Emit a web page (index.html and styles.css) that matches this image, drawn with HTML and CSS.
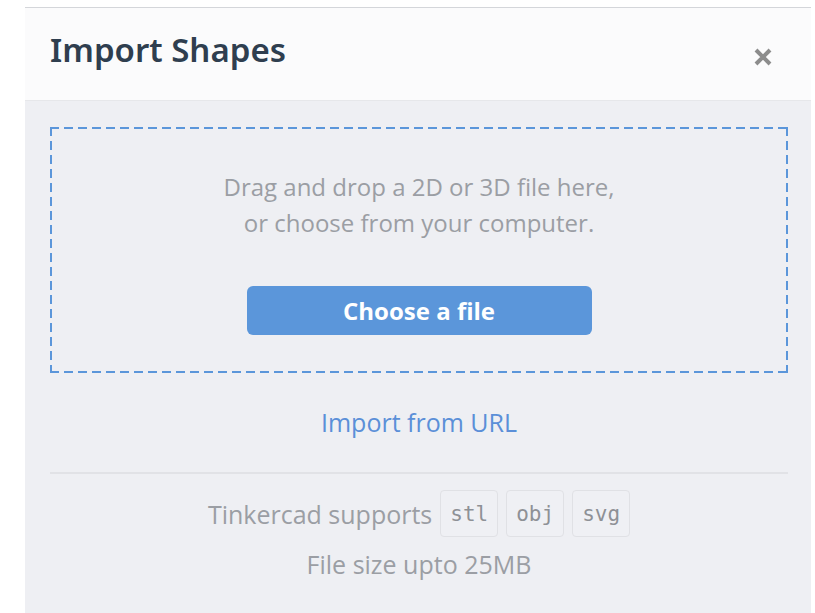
FILE: index.html
```html
<!DOCTYPE html>
<html lang="en">
<head>
<meta charset="utf-8">
<title>Import Shapes</title>
<link rel="stylesheet" href="styles.css">
</head>
<body>
  <div class="dialog">
    <header class="dialog-header">
      <h1 class="dialog-title">Import Shapes</h1>
      <button class="close-btn" aria-label="Close">
        <svg width="20" height="20" viewBox="0 0 20 20">
          <path d="M3 3 L17 17 M17 3 L3 17" stroke="#8c8c8c" stroke-width="4" stroke-linecap="butt"/>
        </svg>
      </button>
    </header>
    <div class="dialog-body">
      <div class="dropzone">
        <p class="drop-text">Drag and drop a 2D or 3D file here,<br>or choose from your computer.</p>
        <button class="choose-btn">Choose a file</button>
      </div>
      <a class="url-link" href="#">Import from URL</a>
      <hr class="divider">
      <div class="supports">
        <span>Tinkercad supports</span>
        <code class="chip">stl</code>
        <code class="chip">obj</code>
        <code class="chip">svg</code>
      </div>
      <p class="size-note">File size upto 25MB</p>
    </div>
  </div>
</body>
</html>
```
FILE: styles.css
```css
html, body {
  margin: 0;
  padding: 0;
  background: #ffffff;
  height: 100%;
}

body {
  font-family: "Open Sans", "Noto Sans", sans-serif;
  overflow: hidden;
}

.dialog {
  margin: 7px 4px 0 25px;
  border-top: 1px solid #d4d6da;
  background: #eeeff3;
  min-height: 620px;
}

.dialog-header {
  height: 93px;
  background: #fbfbfc;
  border-bottom: 1px solid #e6e7ea;
  display: flex;
  align-items: center;
  justify-content: space-between;
  padding: 0 38px 0 25px;
  box-sizing: border-box;
}

.dialog-title {
  margin: 0 0 10px 0;
  font-family: "Noto Sans", sans-serif;
  font-weight: 600;
  font-size: 33px;
  color: #2f3e4f;
  letter-spacing: 0;
}

.close-btn {
  border: 0;
  background: transparent;
  padding: 0;
  width: 20px;
  height: 20px;
  margin-top: 6px;
  cursor: pointer;
  display: flex;
}

.dialog-body {
  padding: 26px 23px 0 25px;
  display: flex;
  flex-direction: column;
  align-items: center;
}

/* long-dash outline drawn with gradients for a 9px dash / 5px gap rhythm */
.dropzone {
  align-self: stretch;
  height: 246px;
  box-sizing: border-box;
  display: flex;
  flex-direction: column;
  align-items: center;
  padding-top: 42px;
  background:
    repeating-linear-gradient(90deg, #5b96da 0 9px, transparent 9px 14px) left top / 100% 2px no-repeat,
    repeating-linear-gradient(90deg, #5b96da 0 9px, transparent 9px 14px) left bottom / 100% 2px no-repeat,
    repeating-linear-gradient(180deg, #5b96da 0 9px, transparent 9px 14px) left top / 2px 100% no-repeat,
    repeating-linear-gradient(180deg, #5b96da 0 9px, transparent 9px 14px) right top / 2px 100% no-repeat;
}

.drop-text {
  margin: 0;
  text-align: center;
  font-size: 24px;
  line-height: 36px;
  color: #9b9ea4;
}

.choose-btn {
  margin-top: 45px;
  width: 345px;
  height: 49px;
  border: 0;
  border-radius: 6px;
  background: #5b96da;
  color: #ffffff;
  font-family: "Open Sans", "Noto Sans", sans-serif;
  font-weight: 700;
  font-size: 24px;
  cursor: pointer;
}

.url-link {
  margin-top: 32px;
  font-size: 25px;
  color: #5b8fd8;
  text-decoration: none;
  line-height: 34px;
}

.divider {
  align-self: stretch;
  margin: 33px 0 0 0;
  border: 0;
  border-top: 2px solid #e1e2e6;
}

.supports {
  margin-top: 16px;
  display: flex;
  align-items: center;
  gap: 8px;
  font-size: 25px;
  color: #9b9ea4;
}

.chip {
  font-family: "DejaVu Sans Mono", "Liberation Mono", monospace;
  font-size: 21px;
  color: #8e9196;
  border: 1px solid #e0e1e5;
  border-radius: 4px;
  height: 47px;
  box-sizing: border-box;
  padding: 0 9px;
  display: flex;
  align-items: center;
  background: #eff0f4;
}

.size-note {
  margin: 9px 0 0 0;
  font-size: 25px;
  color: #9b9ea4;
  line-height: 36px;
}
```
